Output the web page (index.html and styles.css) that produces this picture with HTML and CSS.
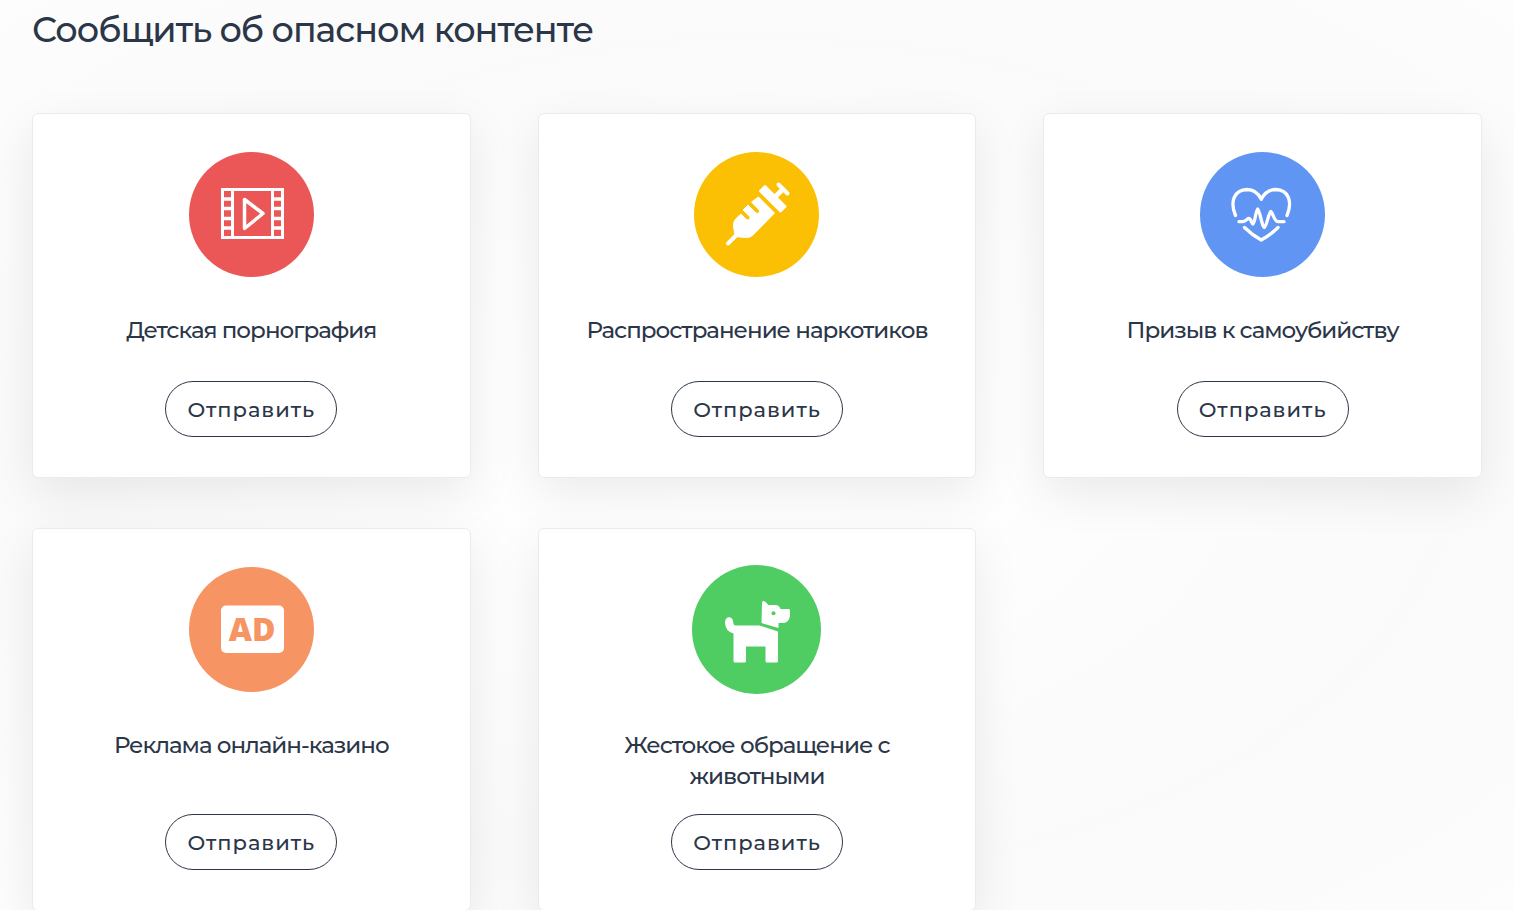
FILE: index.html
```html
<!DOCTYPE html>
<html lang="ru">
<head>
  <meta charset="UTF-8">
  <meta name="viewport" content="width=device-width, initial-scale=1.0">
  <title>Сообщить об опасном контенте</title>
  <link rel="stylesheet" href="styles.css">
</head>
<body>
  <main class="report">
    <h1 class="report-title">Сообщить об опасном контенте</h1>

    <div class="cards">
      <div class="card">
        <svg class="card-icon" viewBox="0 0 125 125" aria-hidden="true">
          <circle cx="62.5" cy="62.5" r="62.5" fill="#eb5757"/>
          <rect x="33.5" y="37.5" width="60" height="48" fill="none" stroke="#fff" stroke-width="3"/>
          <path d="M43.5 37v49M83.5 37v49" stroke="#fff" stroke-width="3"/>
          <path d="M33 47h10M33 56.500h10M33 66.500h10M33 76h10M84 47h10M84 56.500h10M84 66.500h10M84 76h10" stroke="#fff" stroke-width="3.500"/>
          <path d="M55.500 47.500v29L74 61.500z" fill="none" stroke="#fff" stroke-width="3.500" stroke-linejoin="round"/>
        </svg>
        <h2 class="card-title">Детская порнография</h2>
        <button type="button" class="card-button">Отправить</button>
      </div>

      <div class="card">
        <svg class="card-icon" viewBox="0 0 125 125" aria-hidden="true">
          <circle cx="62.5" cy="62.5" r="62.5" fill="#fbbf03"/>
          <path d="M34 91.500l8.500-8.500" stroke="#fff" stroke-width="4" stroke-linecap="round"/>
          <path d="M64.500 45L80.500 61L59 83q-3 3-7.500 2.600L41 84.500L39.500 74q-.5-4.500 2.600-7.500L47 62l5.500 5.500q2 1 3-.2t0-3L49 58l5-5l8 8q2 1 3-.2t0-3L57.500 50z" fill="#fff" stroke="#fff" stroke-linejoin="round"/>
          <path d="M71 34l20.500 20.500l-5 5L66 39z" fill="#fff" stroke="#fff" stroke-width="2" stroke-linejoin="round"/>
          <path d="M79.500 46.500L89 37" stroke="#fff" stroke-width="5"/>
          <path d="M84.500 32.500l9 9" stroke="#fff" stroke-width="4" stroke-linecap="round"/>
        </svg>
        <h2 class="card-title">Распространение наркотиков</h2>
        <button type="button" class="card-button">Отправить</button>
      </div>

      <div class="card">
        <svg class="card-icon" viewBox="0 0 125 125" aria-hidden="true">
          <circle cx="62.5" cy="62.5" r="62.5" fill="#6095f4"/>
          <g fill="none" stroke="#fff" stroke-width="3.300" stroke-linecap="round" stroke-linejoin="round">
            <path d="M35.500 63.500C29.500 49 34.500 38 47 37.500c6.500 0 11.500 4 14.300 9.800C64 41.500 69.500 37.500 76 37.500C88 38 93 49 87 63.500"/>
            <path d="M39 69.700h3.500c3.500 0 4-3.200 6.300-3.200S51.500 72 53 72c1.800 0 3-15 4.700-15s4.500 18.500 6.600 18.500S69 59.500 70.700 59.500s3.500 10.200 7.300 10.200h6"/>
            <path d="M44.500 75.500Q51.500 82.500 61.200 88Q71 82.500 78 75.500"/>
          </g>
        </svg>
        <h2 class="card-title">Призыв к самоубийству</h2>
        <button type="button" class="card-button">Отправить</button>
      </div>

      <div class="card">
        <svg class="card-icon" viewBox="0 0 125 125" aria-hidden="true">
          <circle cx="62.5" cy="62.5" r="62.5" fill="#f69463"/>
          <rect x="32" y="38.500" width="63" height="47.500" rx="5" fill="#fff"/>
          <text class="ad-label" x="63" y="74" text-anchor="middle">AD</text>
        </svg>
        <h2 class="card-title">Реклама онлайн-казино</h2>
        <button type="button" class="card-button">Отправить</button>
      </div>

      <div class="card">
        <svg class="card-icon" viewBox="0 0 125 125" aria-hidden="true">
          <circle cx="62.5" cy="62.5" r="64.5" fill="#4fcc62"/>
          <path d="M68 36q0-3 3-1.500L74.500 38H82q3.500.5 4.500 4H95q1 0 1 1.500V49q-1 6-6 7H84.500v5L67.500 56z" fill="#fff"/>
          <circle cx="79.5" cy="46.300" r="2" fill="#4fcc62"/>
          <path d="M31 55.500c0-7 8-7 8.300 0c.2 2.500 1.200 3 3.200 3H65.500L84 64.500V94q0 1.500-1.500 1.500H73q-1.500 0-1.500-1.500V79.500H52V94q0 1.500-1.500 1.500H41q-1.500 0-1.500-1.500V66.500Q31 64 31 55.500z" fill="#fff"/>
        </svg>
        <h2 class="card-title">Жестокое обращение с животными</h2>
        <button type="button" class="card-button">Отправить</button>
      </div>
    </div>
  </main>
</body>
</html>
```

FILE: styles.css
```css
* {
  box-sizing: border-box;
}
body {
  margin: 0;
  background: radial-gradient(ellipse at center, #fff 10%, #fafafa 65%, #fdfdfd 100%);
  color: #2b3648;
  font-family: Montserrat, Inter, "Liberation Sans", sans-serif;
}
.report {
  padding: 8px 32px 0;
}
.report-title {
  margin: 0 0 61px;
  font-size: 35px;
  font-weight: 500;
  line-height: 44px;
  letter-spacing: -1px;
}
.cards {
  display: grid;
  grid-template-columns: repeat(3, 1fr);
  gap: 50px 67px;
}
.card {
  display: flex;
  flex-direction: column;
  align-items: center;
  padding: 38px 40px 40px;
  background-color: #fff;
  border: 1px solid #ebebed;
  border-radius: 6px;
  box-shadow: 0 16px 48px rgba(0, 0, 0, 0.08);
}
.card-icon {
  display: block;
  width: 125px;
  height: 125px;
  overflow: visible;
}
.card-title {
  min-height: 44px;
  margin: 38px 0 22px;
  font-size: 23px;
  font-weight: 500;
  line-height: 31px;
  letter-spacing: -1px;
  text-align: center;
}
.card-button {
  height: 56px;
  margin-top: auto;
  padding: 0 21px;
  background: transparent;
  border: 1px solid #2b3648;
  border-radius: 28px;
  color: inherit;
  font-family: inherit;
  font-size: 21px;
  font-weight: 500;
  letter-spacing: 1px;
  cursor: pointer;
}
.card-button:hover {
  background-color: #2b3648;
  color: #fff;
}
.ad-label {
  fill: #f69463;
  font-family: "Open Sans", sans-serif;
  font-size: 32px;
  font-weight: 800;
}
```
